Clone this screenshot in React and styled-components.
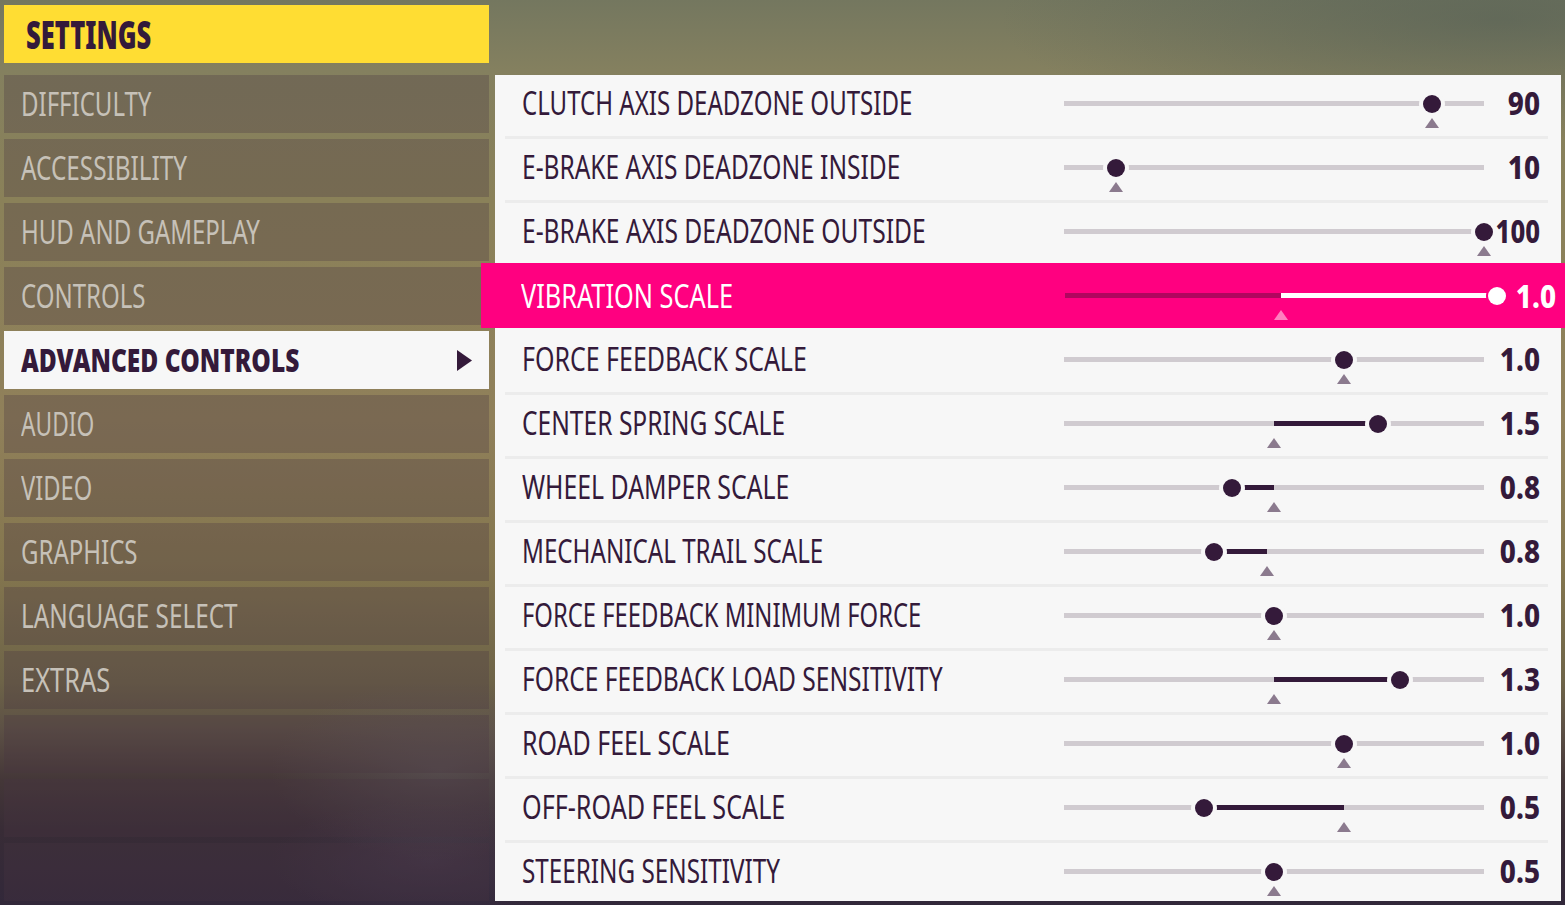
import styled, { createGlobalStyle } from "styled-components";

const GlobalStyle = createGlobalStyle`
  html, body {
    margin: 0;
    height: 100%;
    overflow: hidden;
    background: #332836;
  }
  * { box-sizing: border-box; }
`;

const Page = styled.div`
  width: 1565px;
  height: 905px;
  padding: 5px 0 0 4px;
  display: grid;
  grid-template-columns: 485px 1066px;
  grid-template-rows: 58px 826px;
  column-gap: 6px;
  row-gap: 12px;
  overflow: hidden;
  font-family: "Noto Sans", sans-serif;
  background:
    radial-gradient(170px 90px at 440px 770px, rgba(110, 105, 110, 0.35), transparent),
    radial-gradient(160px 60px at 430px 860px, rgba(90, 75, 100, 0.3), transparent),
    radial-gradient(500px 120px at 1500px 20px, rgba(80, 92, 84, 0.55), transparent),
    linear-gradient(180deg, #74775f 0, #84805f 70px, #8a8159 200px, #90805a 420px, #85774f 560px, #6e6448 680px, #5c5045 730px, #443738 780px, #382c36 830px, #32283a 905px);
`;

const Title = styled.div`
  background: #ffdd33;
  color: #341a3a;
  padding-left: 22px;
  grid-column: 1;
`;

const TitleText = styled.span`
  display: inline-block;
  font-size: 38px;
  font-weight: 900;
  line-height: 58px;
  transform: scaleX(0.67);
  transform-origin: left center;
`;

const Spacer = styled.div`
  grid-column: 2;
`;

const Menu = styled.div`
  display: flex;
  flex-direction: column;
  gap: 6px;
`;

const MenuItem = styled.div`
  height: 58px;
  padding: 0 17px;
  display: flex;
  align-items: center;
  justify-content: space-between;
  color: ${(p) => (p.$active ? "#341a3a" : "#c6c1b8")};
  background: ${(p) => (p.$active ? "#f7f7f7" : "rgba(72, 52, 66, 0.3)")};
`;

const MenuText = styled.span`
  font-size: 32px;
  line-height: 56px;
  white-space: nowrap;
  font-weight: ${(p) => (p.$active ? 900 : 400)};
  transform: scaleX(${(p) => p.$fit});
  transform-origin: left center;
`;

const Arrow = styled.svg`
  width: 15px;
  height: 21px;
  fill: #341a3a;
`;

const Panel = styled.div`
  background: #f7f7f7;
  display: flex;
  flex-direction: column;
`;

const Row = styled.div`
  flex: none;
  display: grid;
  align-items: start;
  grid-template-columns: 542px 420px 56px;
  height: 64px;
  margin: 0 13px 0 10px;
  padding: 0 8px 0 17px;
  border-bottom: 3px solid #ececec;
  color: #341a3a;
  &:last-child {
    height: 58px;
    border-bottom: 0;
  }
`;

const FocusedRow = styled(Row)`
  height: 65px;
  margin: -4px -4px 3px -14px;
  padding: 0 9px 0 40px;
  grid-template-columns: 544px 432px 59px;
  border-bottom: 0;
  align-items: center;
  background: #ff0080;
  color: #fff;
`;

const Label = styled.div`
  font-size: 32px;
  line-height: 56px;
  white-space: nowrap;
  transform: scaleX(${(p) => p.$fit});
  transform-origin: left center;
`;

const Value = styled.div`
  font-size: 32px;
  font-weight: 800;
  line-height: 56px;
  text-align: right;
  white-space: nowrap;
  transform: scaleX(${(p) => p.$fit || 0.87});
  transform-origin: right center;
`;

const Track = styled.div`
  position: relative;
  height: 5px;
  margin-top: ${(p) => (p.$focused ? 0 : "26px")};
  background: ${(p) => (p.$focused ? "#b0065f" : "#d0cbd0")};
`;

const Fill = styled.div`
  position: absolute;
  top: 0;
  bottom: 0;
  background: ${(p) => (p.$focused ? "#fff" : "#341a3a")};
`;

const Thumb = styled.div`
  position: absolute;
  top: 50%;
  width: 18px;
  height: 18px;
  margin: -9px 0 0 -9px;
  border-radius: 50%;
  background: ${(p) => (p.$focused ? "#fff" : "#341a3a")};
  box-shadow: 0 0 0 ${(p) => (p.$focused ? "2px #ff0080" : "4px #f7f7f7")};
`;

const Marker = styled.div`
  position: absolute;
  top: 17px;
  width: 14px;
  height: 10px;
  margin-left: -7px;
  background: ${(p) => (p.$focused ? "#ff7fbf" : "#8b7a8e")};
  clip-path: polygon(50% 0, 100% 100%, 0 100%);
`;

// fit squeezes Noto Sans to the width of the game's condensed font
const MENU = [
  { label: "DIFFICULTY", fit: 0.75 },
  { label: "ACCESSIBILITY", fit: 0.76 },
  { label: "HUD AND GAMEPLAY", fit: 0.75 },
  { label: "CONTROLS", fit: 0.75 },
  { label: "ADVANCED CONTROLS", fit: 0.767, active: true },
  { label: "AUDIO", fit: 0.71 },
  { label: "VIDEO", fit: 0.74 },
  { label: "GRAPHICS", fit: 0.75 },
  { label: "LANGUAGE SELECT", fit: 0.76 },
  { label: "EXTRAS", fit: 0.795 },
  { label: "", fit: 1 },
  { label: "", fit: 1 },
  { label: "", fit: 1 },
];

// thumb and mark are the x offsets on a 420 wide track
const SETTINGS = [
  { label: "CLUTCH AXIS DEADZONE OUTSIDE", fit: 0.752, value: "90", thumb: 368, mark: 368 },
  { label: "E-BRAKE AXIS DEADZONE INSIDE", fit: 0.766, value: "10", thumb: 52, mark: 52 },
  { label: "E-BRAKE AXIS DEADZONE OUTSIDE", fit: 0.769, value: "100", valueFit: 0.8, thumb: 420, mark: 420 },
  { label: "VIBRATION SCALE", fit: 0.791, value: "1.0", thumb: 420, mark: 210, focused: true },
  { label: "FORCE FEEDBACK SCALE", fit: 0.78, value: "1.0", thumb: 280, mark: 280 },
  { label: "CENTER SPRING SCALE", fit: 0.768, value: "1.5", thumb: 314, mark: 210 },
  { label: "WHEEL DAMPER SCALE", fit: 0.776, value: "0.8", thumb: 168, mark: 210 },
  { label: "MECHANICAL TRAIL SCALE", fit: 0.755, value: "0.8", thumb: 150, mark: 203 },
  { label: "FORCE FEEDBACK MINIMUM FORCE", fit: 0.744, value: "1.0", thumb: 210, mark: 210 },
  { label: "FORCE FEEDBACK LOAD SENSITIVITY", fit: 0.768, value: "1.3", thumb: 336, mark: 210 },
  { label: "ROAD FEEL SCALE", fit: 0.78, value: "1.0", thumb: 280, mark: 280 },
  { label: "OFF-ROAD FEEL SCALE", fit: 0.786, value: "0.5", thumb: 140, mark: 280 },
  { label: "STEERING SENSITIVITY", fit: 0.758, value: "0.5", thumb: 210, mark: 210 },
];

const pct = (n) => `${(n / 420) * 100}%`;

const Slider = ({ thumb, mark, focused }) => (
  <Track $focused={focused}>
    <Fill
      $focused={focused}
      style={{
        left: pct(Math.min(thumb, mark)),
        width: pct(Math.abs(thumb - mark)),
      }}
    />
    <Thumb $focused={focused} style={{ left: pct(thumb) }} />
    <Marker $focused={focused} style={{ left: pct(mark) }} />
  </Track>
);

const App = () => {
  return (
    <Page>
      <GlobalStyle />
      <Title>
        <TitleText>SETTINGS</TitleText>
      </Title>
      <Spacer />
      <Menu>
        {MENU.map((item, i) => (
          <MenuItem key={i} $active={item.active}>
            <MenuText $active={item.active} $fit={item.fit}>
              {item.label}
            </MenuText>
            {item.active && (
              <Arrow viewBox="0 0 15 21">
                <path d="M0 0L15 10.5L0 21Z" />
              </Arrow>
            )}
          </MenuItem>
        ))}
      </Menu>
      <Panel>
        {SETTINGS.map((s) => {
          const RowKind = s.focused ? FocusedRow : Row;
          return (
            <RowKind key={s.label}>
              <Label $fit={s.fit}>{s.label}</Label>
              <Slider thumb={s.thumb} mark={s.mark} focused={s.focused} />
              <Value $fit={s.valueFit}>{s.value}</Value>
            </RowKind>
          );
        })}
      </Panel>
    </Page>
  );
};

export default App;
